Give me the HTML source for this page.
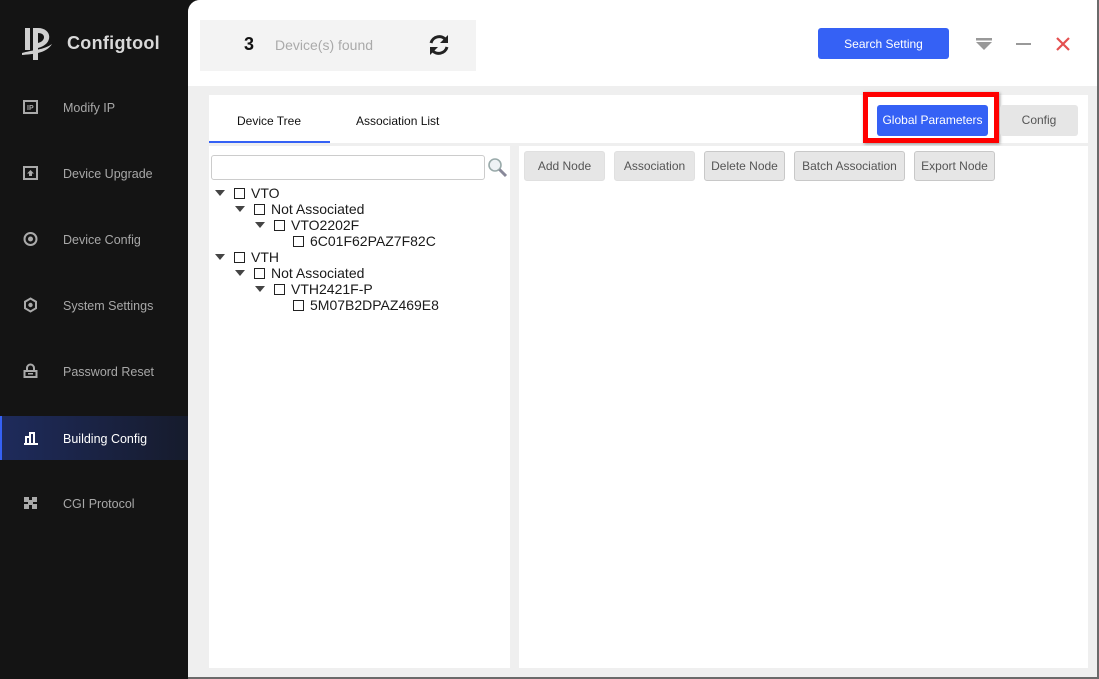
<!DOCTYPE html>
<html><head><meta charset="utf-8"><style>
*{margin:0;padding:0;box-sizing:border-box}
body{width:1099px;height:679px;background:#141414;font-family:"Liberation Sans",Arial,sans-serif;position:relative;overflow:hidden}
.side{position:absolute;left:0;top:0;width:188px;height:679px;background:#141414}
.logo{position:absolute;left:22px;top:26px}
.logotext{position:absolute;left:67px;top:33px;color:#d9d9d9;font-size:18px;font-weight:bold;letter-spacing:0.3px}
.nav{position:absolute;left:0;width:188px;height:44px;color:#a8a8a8;font-size:12.5px}
.nav span{position:absolute;left:63px;top:16px}
.nav svg{position:absolute;left:23px;top:14px}
.nav.act{background:linear-gradient(90deg,#1e2b5c,#161b2c);color:#fff}
.nav.act:before{content:"";position:absolute;left:0;top:0;width:2px;height:44px;background:#3561f5}
.main{position:absolute;left:188px;top:0;width:911px;height:679px;background:#efefef;border-top-left-radius:12px;overflow:hidden;border-right:2px solid #6a6a6a;border-bottom:2px solid #6a6a6a}
.head{position:absolute;left:0;top:0;width:911px;height:86px;background:#fff}
.found{position:absolute;left:12px;top:20px;width:276px;height:51px;background:#f3f3f3}
.btn{position:absolute;font-size:12px;text-align:center;border-radius:3px}
.panel{position:absolute;background:#fff}
.tree{position:absolute;left:215px;font-size:14px;color:#1a1a1a;line-height:16px}
.tree div{position:absolute;white-space:nowrap}
.cb{display:inline-block;width:11px;height:11px;border:1px solid #222;vertical-align:-1px;margin-right:6px}
.tri{display:inline-block;width:0;height:0;border-left:5px solid transparent;border-right:5px solid transparent;border-top:6px solid #444;margin-right:9px;vertical-align:2px}
.tb{position:absolute;top:151px;height:30px;background:#e6e6e6;border:1px solid #e0e0e0;border-radius:3px;color:#555;font-size:12px;line-height:28px;text-align:center}
</style></head><body>
<div class="side">
<svg class="logo" width="36" height="36" viewBox="0 0 36 36"><rect x="3" y="2" width="5" height="22" fill="#d0d0d0"/><rect x="11" y="2" width="5" height="32" fill="#d0d0d0"/><path d="M16 2 C30 2 32 18 16 22 L16 17 C24 15 24 7 16 7Z" fill="#d0d0d0"/><path d="M0 27 C10 24 22 24 30 18 C24 28 10 28 0 29Z" fill="#d0d0d0"/></svg>
<div class="logotext">Configtool</div>
<div class="nav" style="top:85px"><svg width="16" height="16"><rect x="1" y="2" width="13" height="12" fill="none" stroke="#aaa" stroke-width="2"/><text x="4" y="11" font-size="7" fill="#aaa" font-weight="bold">IP</text></svg><span>Modify IP</span></div>
<div class="nav" style="top:151px"><svg width="16" height="16"><rect x="1" y="2" width="13" height="12" fill="none" stroke="#aaa" stroke-width="2"/><path d="M7.5 5 L11 8.5 H9 V11 H6 V8.5 H4Z" fill="#aaa"/></svg><span>Device Upgrade</span></div>
<div class="nav" style="top:217px"><svg width="16" height="16"><circle cx="7.5" cy="8" r="6" fill="none" stroke="#aaa" stroke-width="2"/><circle cx="7.5" cy="8" r="2.5" fill="#aaa"/></svg><span>Device Config</span></div>
<div class="nav" style="top:283px"><svg width="16" height="16"><path d="M7.5 1.5 L13 4.7 V11.2 L7.5 14.5 L2 11.2 V4.7Z" fill="none" stroke="#aaa" stroke-width="2"/><circle cx="7.5" cy="8" r="2.2" fill="#aaa"/></svg><span>System Settings</span></div>
<div class="nav" style="top:349px"><svg width="16" height="16"><path d="M4 8 V5 A3.5 3.5 0 0 1 11 5 V8" fill="none" stroke="#aaa" stroke-width="2"/><rect x="1.5" y="8" width="12" height="6" fill="none" stroke="#aaa" stroke-width="2"/><rect x="5" y="10" width="5" height="1.5" fill="#aaa"/></svg><span>Password Reset</span></div>
<div class="nav act" style="top:416px"><svg width="16" height="16"><path d="M1 14 H15 M3 14 V7 H7 V14 M7 14 V3 H11 V14" fill="none" stroke="#fff" stroke-width="2"/></svg><span>Building Config</span></div>
<div class="nav" style="top:481px"><svg width="16" height="16"><g fill="#aaa"><rect x="1" y="2" width="5" height="5"/><rect x="9" y="2" width="5" height="5"/><rect x="1" y="9" width="5" height="5"/><rect x="9" y="9" width="5" height="5"/><rect x="5" y="5" width="5" height="5"/></g></svg><span>CGI Protocol</span></div>
</div>
<div class="main">
<div class="head">
<div class="found">
<div style="position:absolute;left:44px;top:14px;font-size:18px;font-weight:bold;color:#111">3</div>
<div style="position:absolute;left:75px;top:17px;font-size:14px;color:#aaa">Device(s) found</div>
<svg style="position:absolute;left:227px;top:13px" width="24" height="24" viewBox="0 0 24 24"><path d="M4 10 A8.5 8.5 0 0 1 19 7" fill="none" stroke="#222" stroke-width="3"/><path d="M21 2 V10 H13Z" fill="#222"/><path d="M20 14 A8.5 8.5 0 0 1 5 17" fill="none" stroke="#222" stroke-width="3"/><path d="M3 22 V14 H11Z" fill="#222"/></svg>
</div>
<div class="btn" style="left:630px;top:28px;width:131px;height:31px;background:#3561f5;color:#fff;line-height:32px">Search Setting</div>
<svg style="position:absolute;left:788px;top:38px" width="16" height="14"><rect x="0" y="0" width="16" height="2.5" fill="#999"/><path d="M0 4 H16 L8 12Z" fill="#999"/></svg>
<div style="position:absolute;left:828px;top:43px;width:15px;height:2px;background:#999"></div>
<svg style="position:absolute;left:868px;top:37px" width="14" height="14"><path d="M1 1 L13 13 M13 1 L1 13" stroke="#e45050" stroke-width="2.2"/></svg>
</div>
<div class="panel" style="left:21px;top:95px;width:879px;height:48px"></div>
<div style="position:absolute;left:49px;top:114px;font-size:12px;color:#111">Device Tree</div>
<div style="position:absolute;left:168px;top:114px;font-size:12px;color:#111">Association List</div>
<div style="position:absolute;left:21px;top:141px;width:121px;height:2px;background:#3561f5"></div>
<div style="position:absolute;left:675px;top:92px;width:136px;height:51px;border:5px solid #f00;box-shadow:1px 1px 3px rgba(0,0,0,.4)"></div>
<div class="btn" style="left:689px;top:105px;width:111px;height:31px;background:#3561f5;color:#fff;line-height:31px">Global Parameters</div>
<div class="btn" style="left:812px;top:105px;width:78px;height:31px;background:#e6e6e6;color:#555;line-height:31px">Config</div>
<div class="panel" style="left:21px;top:146px;width:301px;height:522px"></div>
<div class="panel" style="left:331px;top:146px;width:569px;height:522px"></div>
<div style="position:absolute;left:23px;top:155px;width:274px;height:25px;border:1px solid #ccc;border-radius:3px;background:#fff"></div>
<svg style="position:absolute;left:299px;top:157px" width="22" height="22"><circle cx="8" cy="8" r="6" fill="#eef2f5" stroke="#9aa" stroke-width="1.6"/><path d="M12.5 12.5 L19 19" stroke="#889" stroke-width="3"/></svg>
</div>
<div class="tree">
<div style="left:0;top:185px"><span class="tri"></span><span class="cb"></span>VTO</div>
<div style="left:20px;top:201px"><span class="tri"></span><span class="cb"></span>Not Associated</div>
<div style="left:40px;top:217px"><span class="tri"></span><span class="cb"></span>VTO2202F</div>
<div style="left:78px;top:233px"><span class="cb"></span>6C01F62PAZ7F82C</div>
<div style="left:0;top:249px"><span class="tri"></span><span class="cb"></span>VTH</div>
<div style="left:20px;top:265px"><span class="tri"></span><span class="cb"></span>Not Associated</div>
<div style="left:40px;top:281px"><span class="tri"></span><span class="cb"></span>VTH2421F-P</div>
<div style="left:78px;top:297px"><span class="cb"></span>5M07B2DPAZ469E8</div>
</div>
<div class="tb" style="left:524px;width:81px">Add Node</div>
<div class="tb" style="left:614px;width:81px">Association</div>
<div class="tb" style="left:704px;width:81px;border-color:#c8c8c8">Delete Node</div>
<div class="tb" style="left:794px;width:111px;border-color:#c8c8c8">Batch Association</div>
<div class="tb" style="left:914px;width:81px;border-color:#c8c8c8">Export Node</div>
</body></html>
